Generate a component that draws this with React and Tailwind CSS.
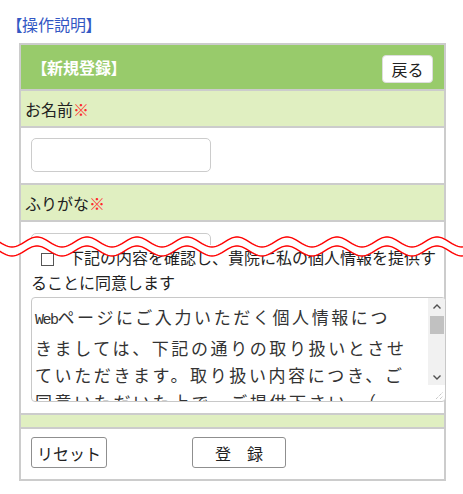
import React from "react";

// red wavy "cut" mark between the two halves of the form
const wavePoints = (cy) => {
  const pts = [];
  for (let x = -2; x <= 466; x += 2) {
    pts.push([x, cy - 5 * Math.cos((2 * Math.PI * (x - 37)) / 50)]);
  }
  return pts;
};

const CutMark = () => {
  const top = wavePoints(12);
  const bottom = wavePoints(21);
  const line = (pts) => pts.map((p, i) => (i === 0 ? "M" : "L") + p[0] + " " + p[1].toFixed(2)).join(" ");
  const band = line(top) + " " + bottom.slice().reverse().map((p) => "L" + p[0] + " " + p[1].toFixed(2)).join(" ") + " Z";
  return (
    <svg className="absolute left-0 top-[230px] pointer-events-none" width="463" height="34" viewBox="0 0 463 34">
      <path d={band} fill="#ffffff" />
      <path d={line(top)} fill="none" stroke="#ff0000" strokeWidth="1.4" />
      <path d={line(bottom)} fill="none" stroke="#ff0000" strokeWidth="1.4" />
    </svg>
  );
};

const Label = ({ children }) => (
  <div className="h-[37px] border-t-2 border-[#cccccc] bg-[#e0efc1] flex items-center pl-[4px] text-[16px]">
    {children}
    <span className="text-[#ff2a2a]">※</span>
  </div>
);

const TextBox = () => (
  <div className="w-[180px] h-[34px] border border-[#cccccc] rounded-[5px] bg-white" />
);

const Scrollbar = () => (
  <div className="w-[17px] flex flex-col">
    <div className="h-[87px] bg-[#f1f1f1] flex flex-col items-center">
      <div className="h-[16px] flex items-center justify-center">
        <svg width="8" height="5" viewBox="0 0 8 5">
          <polyline points="0.5,4.5 4,1 7.5,4.5" fill="none" stroke="#505050" strokeWidth="1.4" />
        </svg>
      </div>
      <div className="mt-[2px] w-[14px] h-[18px] bg-[#c1c1c1]" />
      <div className="flex-1" />
      <div className="h-[16px] flex items-center justify-center">
        <svg width="8" height="5" viewBox="0 0 8 5">
          <polyline points="0.5,0.5 4,4 7.5,0.5" fill="none" stroke="#505050" strokeWidth="1.4" />
        </svg>
      </div>
    </div>
    <div className="flex-1 flex items-end justify-end pr-[2px] pb-[2px]">
      <svg width="8" height="8" viewBox="0 0 8 8">
        <line x1="1" y1="8" x2="8" y2="1" stroke="#b0b0b0" strokeWidth="1" strokeDasharray="1 1" />
        <line x1="5" y1="8" x2="8" y2="5" stroke="#b0b0b0" strokeWidth="1" strokeDasharray="1 1" />
      </svg>
    </div>
  </div>
);

export default function App() {
  return (
    <div className="relative w-[463px] h-[494px] overflow-hidden bg-white text-[#222] font-['Noto_Sans_CJK_JP',sans-serif]">
      <div className="h-[43px] pl-[14px] pt-[12px] text-[16px] leading-[24px] text-[#3358c4] [font-feature-settings:'palt']">
        【操作説明】
      </div>

      <div className="ml-[19px] w-[427px] border-2 border-[#cccccc]">
        <div className="h-[44px] bg-[#98cb6b] flex justify-between pl-[18px] pr-[11px]">
          <div className="self-center text-white font-bold text-[16px] [font-feature-settings:'palt']">【新規登録】</div>
          <button className="mt-[10px] w-[51px] h-[28px] rounded-[4px] border border-[#dddddd] bg-white text-[16px] leading-none text-[#222]">
            戻る
          </button>
        </div>

        <Label>お名前</Label>
        <div className="h-[57px] border-t-2 border-[#cccccc] pl-[10px] pt-[10px]">
          <TextBox />
        </div>

        <Label>ふりがな</Label>
        <div className="h-[25px] border-t-2 border-[#cccccc] pl-[10px] pt-[11px] overflow-hidden">
          <TextBox />
        </div>

        <div className="pl-[10px] pr-[7px] pb-[11px]">
          <div className="text-[16px] leading-[25px] whitespace-nowrap">
            <span className="inline-block align-middle ml-[10px] mr-[14px] w-[13px] h-[13px] border border-[#555555] bg-white" />
            下記の内容を確認し、貴院に私の個人情報を提供す
            <br />
            ることに同意します
          </div>
          <div className="mt-[2px] flex w-[415px] h-[105px] border border-[#c8c8c8] rounded-[4px] overflow-hidden bg-white">
            <div className="flex-1 pl-[3px] pt-[5px] text-[17px] leading-[27px] tracking-[2.6px] text-[#333] whitespace-nowrap overflow-hidden">
              <div>
                <span className="font-['Liberation_Mono',monospace] text-[15px] tracking-[-1.5px]">Web</span>
                ページにご入力いただく個人情報につ
              </div>
              <div>きましては、下記の通りの取り扱いとさせ</div>
              <div>ていただきます。取り扱い内容につき、ご</div>
              <div>同意いただいた上で、ご提供下さい。（</div>
            </div>
            <Scrollbar />
          </div>
        </div>

        <div className="h-[14px] border-t-2 border-[#cccccc] bg-[#e0efc1]" />

        <div className="h-[52px] border-t-2 border-[#cccccc] flex items-start pl-[10px] pt-[8px]">
          <button className="w-[76px] h-[31px] rounded-[3px] border border-[#8f8f8f] bg-white text-[16px] leading-none text-[#222]">
            リセット
          </button>
          <button className="ml-[85px] w-[94px] h-[31px] rounded-[3px] border border-[#8f8f8f] bg-white text-[16px] leading-none text-[#222]">
            登　録
          </button>
        </div>
      </div>

      <CutMark />
    </div>
  );
}
